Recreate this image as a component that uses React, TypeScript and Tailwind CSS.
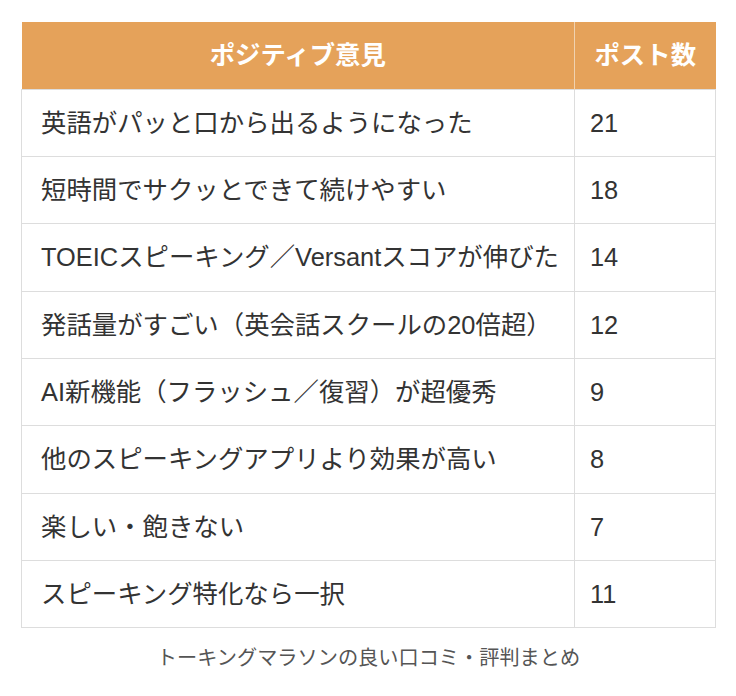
const rows: [string, number][] = [
  ['英語がパッと口から出るようになった', 21],
  ['短時間でサクッとできて続けやすい', 18],
  ['TOEICスピーキング／Versantスコアが伸びた', 14],
  ['発話量がすごい（英会話スクールの20倍超）', 12],
  ['AI新機能（フラッシュ／復習）が超優秀', 9],
  ['他のスピーキングアプリより効果が高い', 8],
  ['楽しい・飽きない', 7],
  ['スピーキング特化なら一択', 11],
];

export default function App() {
  return (
    <div
      className="min-h-screen bg-white pt-[22px] pl-[21px]"
      style={{ fontFamily: '"Liberation Sans", "Noto Sans CJK JP", sans-serif' }}
    >
      <table className="w-[695px] border-collapse text-[25.4px] text-[#333]">
        <thead>
          <tr className="h-[67.3px] bg-[#e5a25a] text-white">
            <th className="w-[553px] border-r border-[#f0d2b0] font-bold">ポジティブ意見</th>
            <th className="font-bold">ポスト数</th>
          </tr>
        </thead>
        <tbody>
          {rows.map(([label, count]) => (
            <tr key={label} className="h-[67.3px]">
              <td className="border border-[#dddddd] pl-[19px] whitespace-nowrap">{label}</td>
              <td className="border border-[#dddddd] pl-[15px]">{count}</td>
            </tr>
          ))}
        </tbody>
      </table>
      <p className="w-[695px] mt-[16px] text-center text-[20.2px] leading-[28px] text-[#555]">
        トーキングマラソンの良い口コミ・評判まとめ
      </p>
    </div>
  );
}
